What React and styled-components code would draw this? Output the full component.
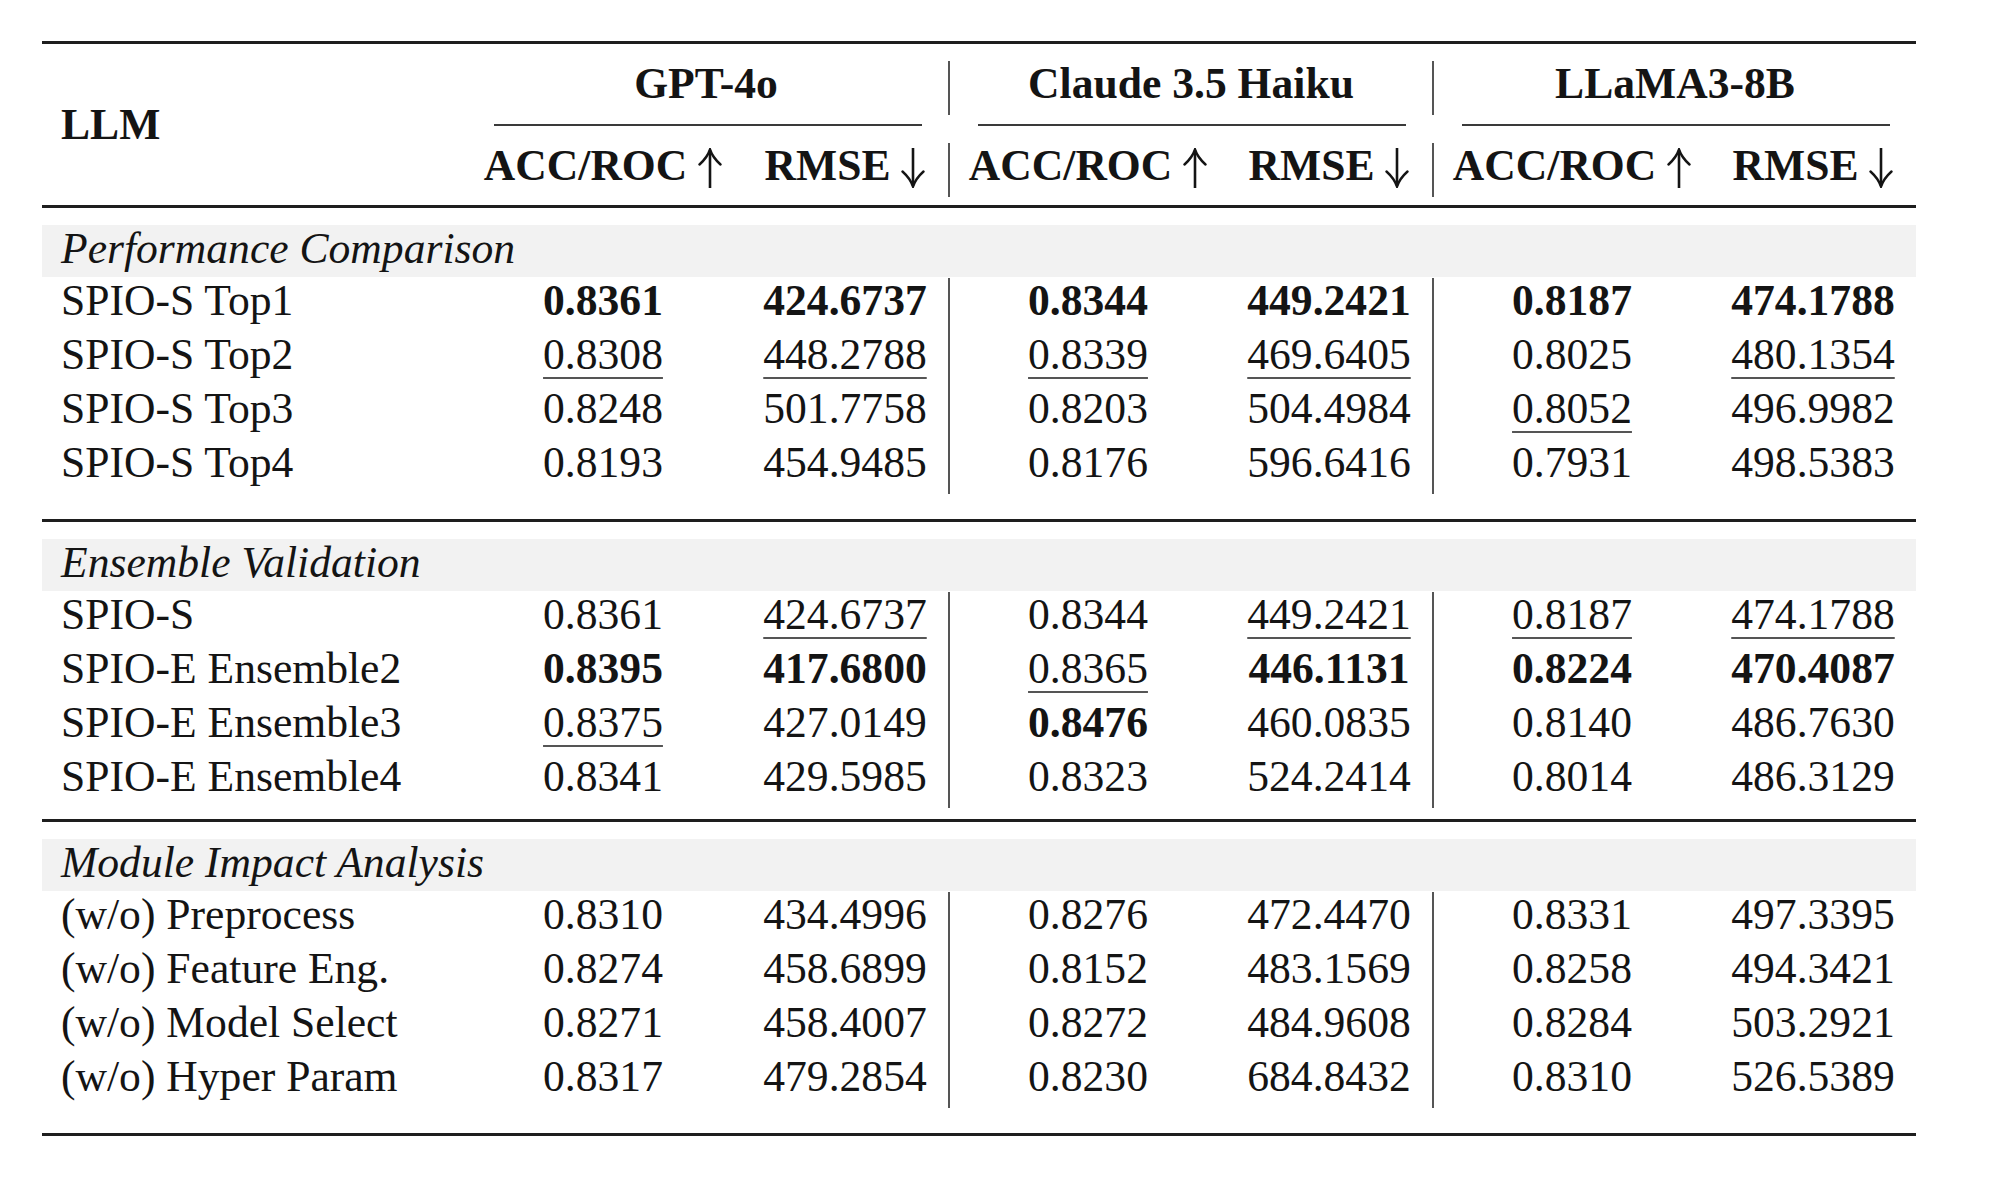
import styled, { createGlobalStyle } from 'styled-components';

const GlobalStyle = createGlobalStyle`
  body {
    margin: 0;
    background: #fff;
  }
`;

const groups = ['GPT-4o', 'Claude 3.5 Haiku', 'LLaMA3-8B'];

// each value: [text, mark] where mark is 'b' (bold), 'u' (underline) or ''
const sections = [
  {
    title: 'Performance Comparison',
    after: 25,
    rows: [
      ['SPIO-S Top1', [['0.8361', 'b'], ['424.6737', 'b'], ['0.8344', 'b'], ['449.2421', 'b'], ['0.8187', 'b'], ['474.1788', 'b']]],
      ['SPIO-S Top2', [['0.8308', 'u'], ['448.2788', 'u'], ['0.8339', 'u'], ['469.6405', 'u'], ['0.8025', ''], ['480.1354', 'u']]],
      ['SPIO-S Top3', [['0.8248', ''], ['501.7758', ''], ['0.8203', ''], ['504.4984', ''], ['0.8052', 'u'], ['496.9982', '']]],
      ['SPIO-S Top4', [['0.8193', ''], ['454.9485', ''], ['0.8176', ''], ['596.6416', ''], ['0.7931', ''], ['498.5383', '']]],
    ],
  },
  {
    title: 'Ensemble Validation',
    after: 11,
    rows: [
      ['SPIO-S', [['0.8361', ''], ['424.6737', 'u'], ['0.8344', ''], ['449.2421', 'u'], ['0.8187', 'u'], ['474.1788', 'u']]],
      ['SPIO-E Ensemble2', [['0.8395', 'b'], ['417.6800', 'b'], ['0.8365', 'u'], ['446.1131', 'b'], ['0.8224', 'b'], ['470.4087', 'b']]],
      ['SPIO-E Ensemble3', [['0.8375', 'u'], ['427.0149', ''], ['0.8476', 'b'], ['460.0835', ''], ['0.8140', ''], ['486.7630', '']]],
      ['SPIO-E Ensemble4', [['0.8341', ''], ['429.5985', ''], ['0.8323', ''], ['524.2414', ''], ['0.8014', ''], ['486.3129', '']]],
    ],
  },
  {
    title: 'Module Impact Analysis',
    after: 25,
    rows: [
      ['(w/o) Preprocess', [['0.8310', ''], ['434.4996', ''], ['0.8276', ''], ['472.4470', ''], ['0.8331', ''], ['497.3395', '']]],
      ['(w/o) Feature Eng.', [['0.8274', ''], ['458.6899', ''], ['0.8152', ''], ['483.1569', ''], ['0.8258', ''], ['494.3421', '']]],
      ['(w/o) Model Select', [['0.8271', ''], ['458.4007', ''], ['0.8272', ''], ['484.9608', ''], ['0.8284', ''], ['503.2921', '']]],
      ['(w/o) Hyper Param', [['0.8317', ''], ['479.2854', ''], ['0.8230', ''], ['684.8432', ''], ['0.8310', ''], ['526.5389', '']]],
    ],
  },
];

// thin math-style arrow (\uparrow / \downarrow)
const Arrow = ({ down }) => (
  <ArrowSvg viewBox='0 0 24 40' width='24' height='40' $down={down}>
    <path d='M12 2.5 V40' stroke='#141414' strokeWidth='2.6' fill='none' />
    <path
      d='M1.5 16.5 C6.5 12 10 7.5 12 1.5 C14 7.5 17.5 12 22.5 16.5'
      stroke='#141414'
      strokeWidth='2.4'
      fill='none'
      strokeLinecap='round'
    />
  </ArrowSvg>
);

const App = () => (
  <Page>
    <GlobalStyle />
    <Table>
      <Rule $h={3} $mt={0} />

      <Head>
        <Corner>LLM</Corner>
        {groups.map((g, i) => (
          <GroupTitle key={g} $col={2 + i * 2} $divider={i > 0}>
            {g}
          </GroupTitle>
        ))}
        {groups.map((g, i) => (
          <CmidRule key={g} $col={2 + i * 2} />
        ))}
        {groups.map((g, i) => [
          <SubHead key={g + 'a'} $divider={i > 0}>
            ACC/ROC <Arrow />
          </SubHead>,
          <SubHead key={g + 'r'}>
            RMSE <Arrow down />
          </SubHead>,
        ])}
      </Head>

      <Rule $h={3} $mt={8} />

      {sections.map((s) => (
        <Section key={s.title}>
          <Band>{s.title}</Band>
          <Rows>
            {s.rows.map(([label, vals]) => (
              <Row key={label}>
                <Label>{label}</Label>
                {vals.map(([v, mark], j) => (
                  <Value key={j} $bold={mark === 'b'} $divider={j === 2 || j === 4}>
                    {mark === 'u' ? <Under>{v}</Under> : v}
                  </Value>
                ))}
              </Row>
            ))}
          </Rows>
          <Rule $h={3} $mt={s.after} />
        </Section>
      ))}
    </Table>
  </Page>
);

const Page = styled.div`
  padding: 41px 0 40px 42px;
  font-family: 'Liberation Serif', 'Times New Roman', serif;
  font-size: 43.6px;
  color: #141414;
`;

const Table = styled.div`
  width: 1874px;
  display: flex;
  flex-direction: column;
`;

const Rule = styled.div`
  height: ${(p) => p.$h}px;
  margin-top: ${(p) => p.$mt}px;
  background: #1e1e1e;
`;

const Head = styled.div`
  display: grid;
  grid-template-columns: 422px repeat(3, 278px 206px);
  grid-template-rows: 54px 28px 54px;
  margin-top: 17px;
  font-weight: 700;
  line-height: 44px;
`;

const Corner = styled.div`
  grid-column: 1;
  grid-row: 1 / 4;
  align-self: center;
  padding: 0 0 10px 19px;
`;

const GroupTitle = styled.div`
  grid-row: 1;
  grid-column: ${(p) => p.$col} / span 2;
  text-align: center;
  padding-bottom: 10px;
  border-left: ${(p) => (p.$divider ? '2px solid #555' : 'none')};
`;

const CmidRule = styled.div`
  grid-row: 2;
  grid-column: ${(p) => p.$col} / span 2;
  height: 2px;
  margin: 9px 26px 0 30px;
  background: #3a3a3a;
`;

const SubHead = styled.div`
  grid-row: 3;
  text-align: center;
  white-space: nowrap;
  padding-bottom: 10px;
  border-left: ${(p) => (p.$divider ? '2px solid #555' : 'none')};
`;

const ArrowSvg = styled.svg`
  display: inline-block;
  vertical-align: -8px;
  transform: ${(p) => (p.$down ? 'scaleY(-1)' : 'none')};
`;

const Section = styled.div`
  display: flex;
  flex-direction: column;
`;

const Band = styled.div`
  margin-top: 17px;
  height: 52px;
  box-sizing: border-box;
  padding: 0 0 6px 19px;
  line-height: 46px;
  background: #f2f2f2;
  font-style: italic;
`;

const Rows = styled.div`
  margin-top: 1px;
  display: flex;
  flex-direction: column;
`;

const Row = styled.div`
  display: grid;
  grid-template-columns: 422px repeat(3, 278px 206px);
  height: 54px;
  line-height: 44px;
`;

const Label = styled.div`
  padding: 0 0 10px 19px;
  white-space: nowrap;
`;

const Value = styled.div`
  text-align: center;
  padding-bottom: 10px;
  font-weight: ${(p) => (p.$bold ? 700 : 400)};
  border-left: ${(p) => (p.$divider ? '2px solid #555' : 'none')};
`;

const Under = styled.span`
  text-decoration: underline;
  text-decoration-thickness: 2px;
  text-underline-offset: 8px;
  text-decoration-color: #555;
`;

export default App;
